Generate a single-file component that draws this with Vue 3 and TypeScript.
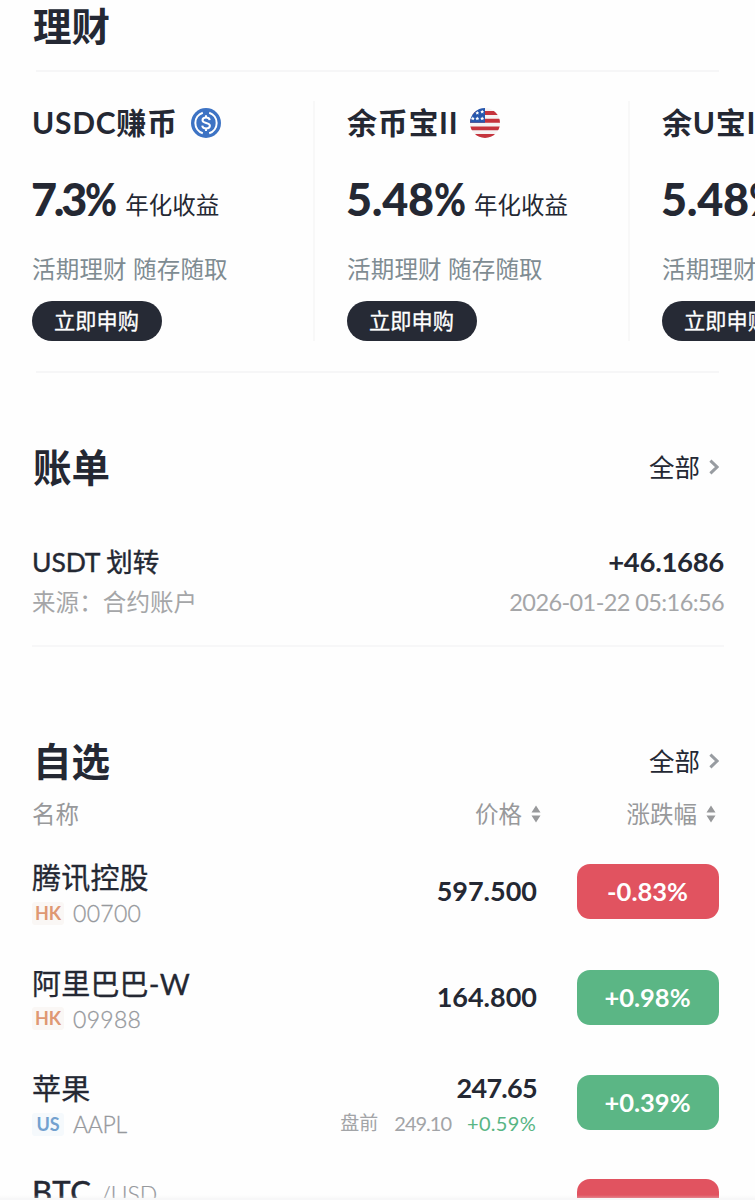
<script setup lang="ts">
interface Product {
  name: string
  rate: string
  icon: 'usdc' | 'flag' | ''
  rateClass: string
}
interface Quote {
  name: string
  pair?: string
  market?: 'HK' | 'US'
  code?: string
  price: string
  pre?: { price: string; change: string }
  change: string
  up: boolean
}

const products: Product[] = [
  { name: 'USDC赚币', rate: '7.3', icon: 'usdc', rateClass: 'tight' },
  { name: '余币宝II', rate: '5.48', icon: 'flag', rateClass: '' },
  { name: '余U宝II', rate: '5.48', icon: '', rateClass: '' },
]
const quotes: Quote[] = [
  { name: '腾讯控股', market: 'HK', code: '00700', price: '597.500', change: '-0.83%', up: false },
  { name: '阿里巴巴-W', market: 'HK', code: '09988', price: '164.800', change: '+0.98%', up: true },
  { name: '苹果', market: 'US', code: 'AAPL', price: '247.65', pre: { price: '249.10', change: '+0.59%' }, change: '+0.39%', up: true },
  { name: 'BTC', pair: '/USD', price: '', change: '-0.28%', up: false },
]
</script>

<template>
  <main class="page">
    <section class="earn">
      <h2 class="title">理财</h2>
      <div class="cards">
        <article v-for="(p, i) in products" :key="i" class="card">
          <h3 class="card-name">
            <span>{{ p.name }}</span>
            <svg v-if="p.icon === 'usdc'" class="coin usdc" viewBox="0 0 30 30">
              <circle cx="15" cy="15" r="15" fill="#3d73c4" />
              <g fill="none" stroke="#fff" stroke-width="2">
                <path d="M11.8 4.8a10.7 10.7 0 0 0 0 20.4M18.2 4.8a10.7 10.7 0 0 1 0 20.4" />
                <path d="M18.7 12.1c-.3-1.7-1.7-2.5-3.6-2.5-2.1 0-3.6.9-3.6 2.6 0 3.8 7.4 1.7 7.4 5.6 0 1.7-1.6 2.7-3.8 2.7-2.3 0-3.7-1-3.9-2.8M15 7.3v2.5M15 20.3v2.6" />
              </g>
            </svg>
            <svg v-else-if="p.icon === 'flag'" class="coin" viewBox="0 0 30 30">
              <defs><clipPath id="disc"><circle cx="15" cy="15" r="15" /></clipPath></defs>
              <g clip-path="url(#disc)">
                <path fill="#f6f3f3" d="M0 0h30v30H0z" />
                <path fill="#c5343d" d="M0 3h30v3.900H0zM0 10.800h30v3.900H0zM0 18.400h30v3.900H0zM0 26h30V30H0z" />
                <path fill="#2757ad" d="M0 0h15v14.700H0z" />
                <path fill="#fff" d="m7.3 3 .6 1.2 1.3.2-.9.9.2 1.3-1.2-.6-1.2.6.2-1.3-.9-.9 1.3-.2zM12.2 1.8l.6 1.2 1.3.2-.9.9.2 1.3-1.2-.6-1.2.6.2-1.3-.9-.9 1.3-.2zM7.3 8.6l.6 1.2 1.3.2-.9.9.2 1.3-1.2-.6-1.2.6.2-1.3-.9-.9 1.3-.2zM12.2 8.6l.6 1.2 1.3.2-.9.9.2 1.3-1.2-.6-1.2.6.2-1.3-.9-.9 1.3-.2zM2.800 8.600l.6 1.2 1.3.2-.9.9.2 1.3-1.2-.6-1.2.6.2-1.3-.9-.9 1.3-.2z" />
              </g>
            </svg>
          </h3>
          <p class="rate"><b :class="p.rateClass">{{ p.rate }}<i>%</i></b><span>年化收益</span></p>
          <p class="desc">活期理财 随存随取</p>
          <button class="buy">立即申购</button>
        </article>
      </div>
    </section>

    <section class="bills">
      <header class="head">
        <h2 class="title">账单</h2>
        <a class="all">全部<svg viewBox="0 0 10 16"><path d="M1.4 1.6 8 8l-6.600 6.400" /></svg></a>
      </header>
      <div class="bill">
        <div class="bill-line"><span class="bill-name">USDT 划转</span><span class="amount">+46.1686</span></div>
        <div class="bill-line muted"><span class="source">来源：合约账户</span><span class="date">2026-01-22 05:16:56</span></div>
      </div>
    </section>

    <section class="watch">
      <header class="head">
        <h2 class="title">自选</h2>
        <a class="all">全部<svg viewBox="0 0 10 16"><path d="M1.400 1.600 8 8l-6.600 6.400" /></svg></a>
      </header>
      <div class="cols">
        <span>名称</span>
        <span class="col-price">价格<svg viewBox="0 0 10 18"><path d="M5 .5 9.500 7.500h-9zM5 17.500.5 10.500h9z" /></svg></span>
        <span class="col-change">涨跌幅<svg viewBox="0 0 10 18"><path d="M5 .5 9.500 7.500h-9zM5 17.500.5 10.500h9z" /></svg></span>
      </div>
      <div v-for="q in quotes" :key="q.name" class="quote" :class="{ last: q.pair }">
        <div class="asset">
          <div class="asset-name">{{ q.name }}<small v-if="q.pair">{{ q.pair }}</small></div>
          <div v-if="q.market" class="asset-sub">
            <span class="tag" :class="q.market.toLowerCase()">{{ q.market }}</span>
            <span class="code" :class="{ alpha: q.market === 'US' }">{{ q.code }}</span>
          </div>
        </div>
        <div class="price" :class="{ double: q.pre }">
          <div class="price-main">{{ q.price }}</div>
          <div v-if="q.pre" class="pre">
            <span class="pre-label">盘前</span><span class="pre-price">{{ q.pre.price }}</span><span class="gain">{{ q.pre.change }}</span>
          </div>
        </div>
        <div class="badge" :class="q.up ? 'up' : 'down'">{{ q.change }}</div>
      </div>
    </section>
    <div class="bottom-edge"></div>
  </main>
</template>

<style>
body { margin: 0; background: #fefefe; }
</style>

<style scoped>
.page {
  position: relative;
  width: 755px;
  height: 1200px;
  overflow: hidden;
  background: #fefefe;
  color: #242833;
  font-family: Lato, "Noto Sans CJK SC", sans-serif;
  box-sizing: border-box;
}
h2, h3, p { margin: 0; }
.title { font-size: 38.5px; line-height: 52px; font-weight: 700; padding-left: 1px; }
.earn { padding-left: 32px; height: 373px; box-sizing: border-box; }
.earn .title { height: 70px; }
.cards {
  display: flex;
  width: 723px;
  height: 240px;
  padding: 31px 0 32px;
  background:
    linear-gradient(#f6f6f7, #f6f6f7) 4px 0 / 683px 2px no-repeat,
    linear-gradient(#f6f6f7, #f6f6f7) 4px 100% / 683px 2px no-repeat;
}
.card { flex: 0 0 283px; box-sizing: border-box; height: 240px; border-right: 2px solid #f8f8f8; margin-right: 32px; white-space: nowrap; }
.card-name { display: flex; align-items: center; height: 43px; font-size: 30px; font-weight: 700; letter-spacing: 0.7px; }
.card-name span { line-height: 42px; height: 43px; }
.coin { width: 30px; height: 30px; margin-left: 11.5px; }
.usdc { margin-left: 13px; }
.rate { display: flex; align-items: flex-start; height: 60px; margin-top: 25px; }
.rate b { font-size: 45px; line-height: 60px; font-weight: 900; letter-spacing: -0.3px; margin-left: -1px; }
.rate b.tight { letter-spacing: -3.3px; }
.rate i { display: inline-block; font-style: normal; letter-spacing: 0; transform: scaleX(0.86); transform-origin: left center; margin-right: -5px; }
.tight i { margin-left: 1px; }
.rate span { font-size: 23.5px; line-height: 73px; margin-left: 8px; }
.desc { font-size: 23.5px; line-height: 32px; margin-top: 24px; color: #7f8c92; letter-spacing: 0.2px; }
.buy {
  display: block; width: 130px; height: 40px; margin: 16px 0 0 -0.5px; padding: 0; border: 0; border-radius: 20px;
  background: #262a35; color: #fff; font: 400 21.2px/40px Lato, "Noto Sans CJK SC", sans-serif; -webkit-text-stroke: 0.3px #fff;
}
.head { display: flex; justify-content: space-between; align-items: center; height: 52px; padding-right: 36px; }
.all { display: flex; align-items: center; font-size: 25.5px; line-height: 36px; }
.all svg { width: 10px; height: 16px; margin-left: 9px; fill: none; stroke: #989ca1; stroke-width: 3; }
.bills { padding: 68px 0 0 32px; }
.bill { width: 692px; height: 101px; margin-top: 51px; border-bottom: 2px solid #f7f7f8; }
.bill-line { display: flex; justify-content: space-between; height: 36px; line-height: 36px; padding-bottom: 4px; }
.bill-name { font-size: 26.5px; -webkit-text-stroke: 0.4px currentColor; letter-spacing: -0.1px; }
.amount { font-size: 27.5px; font-weight: 700; letter-spacing: -0.3px; }
.muted { color: #a5a6a8; font-size: 23.5px; }
.source { letter-spacing: 0.1px; }
.date { font-size: 23.5px; letter-spacing: -0.6px; }
.watch { padding: 88px 0 0 32px; }
.cols { display: flex; height: 32px; line-height: 32px; margin-top: 11px; font-size: 23.5px; color: #98999b; }
.cols > span:first-child { width: 200px; }
.cols svg { width: 10px; height: 18px; margin-left: 9px; fill: #98999b; }
.col-price, .col-change { display: flex; align-items: center; justify-content: flex-end; }
.col-price { width: 309px; }
.col-change { width: 175px; }
.quote { display: flex; height: 105.7px; padding-top: 34px; box-sizing: border-box; }
.asset { width: 245px; margin-top: -6px; }
.asset-name { font-size: 29px; line-height: 40px; -webkit-text-stroke: 0.3px currentColor; letter-spacing: 0.2px; }
.last .asset { margin-top: -8px; }
.last .asset-name { font-size: 31px; letter-spacing: 0.7px; -webkit-text-stroke-width: 0.5px; }
.asset-name small { font-size: 23px; font-weight: 300; color: #96999d; margin-left: 9px; letter-spacing: 0; -webkit-text-stroke-width: 0.2px; }
.asset-sub { display: flex; align-items: center; height: 30px; }
.tag { width: 32px; height: 23px; line-height: 23px; border-radius: 3px; text-align: center; font-size: 18px; font-weight: 700; }
.hk { color: #df9873; background: #faf7f5; }
.us { color: #73a1cf; background: #f5f9fc; }
.code { margin-left: 9px; font-size: 23px; line-height: 30px; color: #96999d; font-weight: 300; letter-spacing: 0.3px; -webkit-text-stroke: 0.3px currentColor; }
.code.alpha { letter-spacing: -0.3px; }
.price { width: 260px; padding-right: 1px; text-align: right; padding-top: 9px; }
.price.double { padding-top: 0; margin-top: -5px; }
.price-main { font-size: 27px; line-height: 36px; font-weight: 700; }
.double .price-main { letter-spacing: -0.7px; }
.pre { display: flex; justify-content: flex-end; gap: 16px; font-size: 20px; line-height: 34px; color: #a2a4a7; margin-right: 1px; }
.pre-label { font-size: 19px; }
.pre-price { letter-spacing: -1px; }
.gain { color: #58b584; letter-spacing: 0.3px; }
.badge { width: 142px; height: 55px; line-height: 55px; margin-left: 38.5px; border-radius: 13px; color: #fff; text-align: center; font-size: 25.5px; font-weight: 700; }
.up { background: #5bb685; }
.down { background: #e15360; }
.last { padding-top: 32px; }
.bottom-edge { position: absolute; left: 0; right: 0; bottom: 0; height: 5px; background: linear-gradient(rgba(240, 240, 241, 0) 0, rgba(238, 238, 239, 0.3) 3px, #f7f7f8 3px); }
</style>
